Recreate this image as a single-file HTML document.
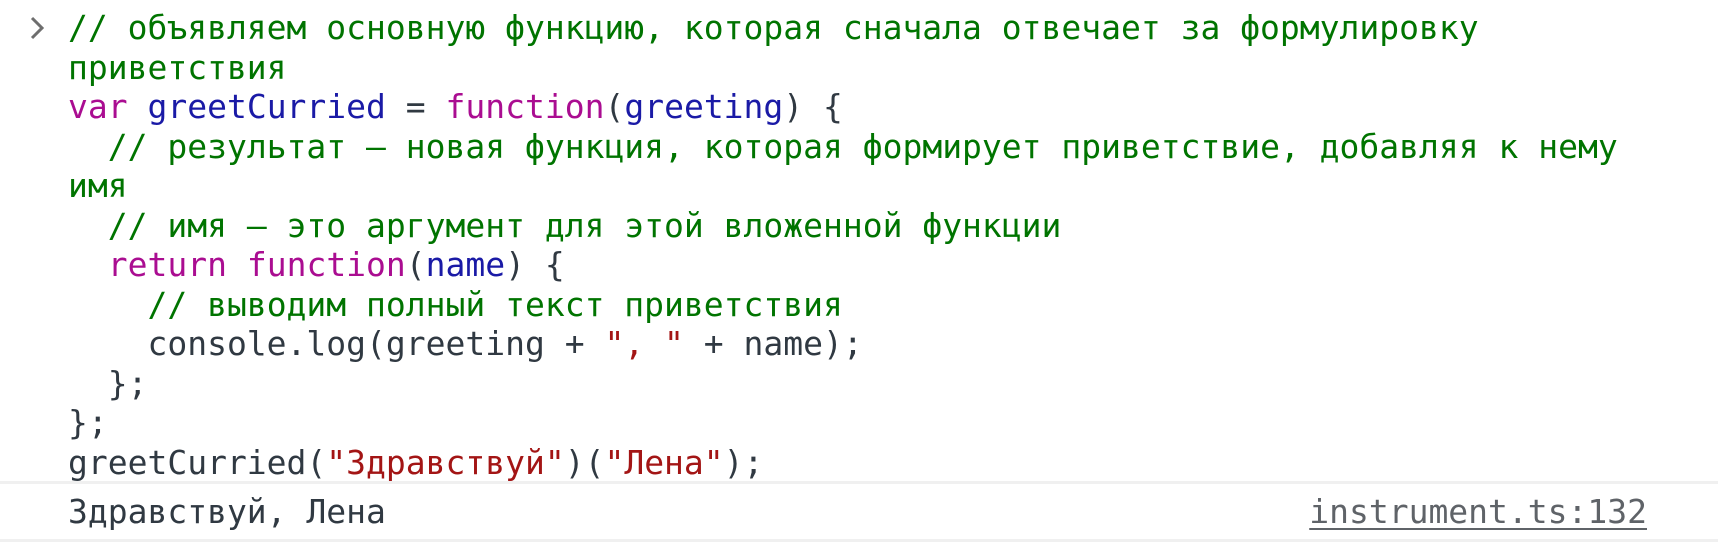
<!DOCTYPE html>
<html><head><meta charset="utf-8"><style>
html,body{margin:0;padding:0;background:#fff;width:1718px;height:556px;overflow:hidden}
body{font-family:"DejaVu Sans Mono","Liberation Mono",monospace;font-size:33px;color:#303942}
.code{position:absolute;left:68px;top:8px;line-height:39.5px;white-space:pre}
.c{color:#007400}.k{color:#aa0d91}.v{color:#1a1aa6}.s{color:#a31515}
.chev{position:absolute;left:28px;top:15px}
.b1{position:absolute;left:0;right:0;top:481px;height:3px;background:#f0f0f0}
.b2{position:absolute;left:0;right:0;top:539px;height:3px;background:#f0f0f0}
.out{position:absolute;left:68px;top:492px;line-height:40px}
.link{position:absolute;right:71px;top:492px;line-height:40px;color:#5f6368;text-decoration:underline;text-underline-offset:5px;text-decoration-thickness:2px}
</style></head><body>
<svg class="chev" width="20" height="26" viewBox="0 0 20 26"><path d="M4 3 L14 13 L4 23" fill="none" stroke="#6e6e6e" stroke-width="3"/></svg>
<div class="code"><span class="c">// объявляем основную функцию, которая сначала отвечает за формулировку
приветствия</span>
<span class="k">var</span> <span class="v">greetCurried</span> = <span class="k">function</span>(<span class="v">greeting</span>) {
  <span class="c">// результат — новая функция, которая формирует приветствие, добавляя к нему
имя</span>
  <span class="c">// имя — это аргумент для этой вложенной функции</span>
  <span class="k">return</span> <span class="k">function</span>(<span class="v">name</span>) {
    <span class="c">// выводим полный текст приветствия</span>
    console.log(greeting + <span class="s">", "</span> + name);
  };
};
greetCurried(<span class="s">"Здравствуй"</span>)(<span class="s">"Лена"</span>);</div>
<div class="b1"></div>
<div class="out">Здравствуй, Лена</div>
<div class="link">instrument.ts:132</div>
<div class="b2"></div>
</body></html>
